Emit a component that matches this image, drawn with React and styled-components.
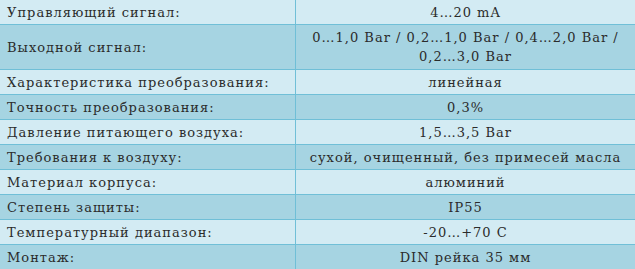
import styled, { createGlobalStyle } from "styled-components";

const GlobalStyle = createGlobalStyle`
  html, body {
    margin: 0;
    padding: 0;
    background: #ffffff;
  }
`;

const Table = styled.div`
  width: 635px;
  font-family: "DejaVu Serif", "Liberation Serif", serif;
  font-size: 13px;
  letter-spacing: 1px;
  color: #2b2b2b;
`;

const Row = styled.div`
  display: grid;
  grid-template-columns: 296px 1fr;
  min-height: ${(p) => (p.$tall ? "44px" : "24px")};
  background-color: ${(p) => (p.$dark ? "#a6d4e2" : "#d3ebf3")};
  border-top: 1px solid #70bfd7;
  &:first-child {
    border-top: 0;
  }
`;

const Label = styled.div`
  display: flex;
  align-items: center;
  padding-left: 7px;
  border-right: 1px solid #70bfd7;
`;

const Value = styled.div`
  display: flex;
  align-items: center;
  justify-content: center;
  padding: 0 6px;
  text-align: center;
  line-height: 19px;
`;

const specs = [
  ["Управляющий сигнал:", "4…20 mA"],
  ["Выходной сигнал:", "0…1,0 Bar / 0,2…1,0 Bar / 0,4…2,0 Bar / 0,2…3,0 Bar", true],
  ["Характеристика преобразования:", "линейная"],
  ["Точность преобразования:", "0,3%"],
  ["Давление питающего воздуха:", "1,5…3,5 Bar"],
  ["Требования к воздуху:", "сухой, очищенный, без примесей масла"],
  ["Материал корпуса:", "алюминий"],
  ["Степень защиты:", "IP55"],
  ["Температурный диапазон:", "-20…+70 C"],
  ["Монтаж:", "DIN рейка 35 мм"],
];

export default function App() {
  return (
    <>
      <GlobalStyle />
      <Table>
        {specs.map(([label, value, tall], i) => (
          <Row key={i} $dark={i % 2 === 1} $tall={tall}>
            <Label>{label}</Label>
            <Value>{value}</Value>
          </Row>
        ))}
      </Table>
    </>
  );
}
